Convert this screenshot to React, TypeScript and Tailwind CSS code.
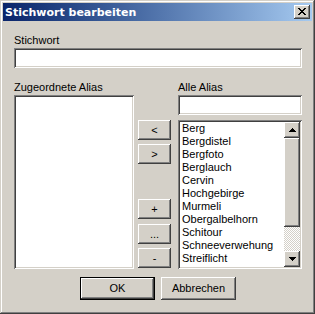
import React from "react";

const raised =
  "bg-[#d4d0c8] shadow-[inset_-1px_-1px_#404040,inset_1px_1px_#fff,inset_-2px_-2px_#808080,inset_2px_2px_#d4d0c8]";
const sunken =
  "bg-white shadow-[inset_1px_1px_#808080,inset_-1px_-1px_#fff,inset_2px_2px_#404040,inset_-2px_-2px_#d4d0c8]";

const aliases = [
  "Berg",
  "Bergdistel",
  "Bergfoto",
  "Berglauch",
  "Cervin",
  "Hochgebirge",
  "Murmeli",
  "Obergalbelhorn",
  "Schitour",
  "Schneeverwehung",
  "Streiflicht",
  "Sonnenblumen",
];

// pixel rows: [y, x, width]
const closeGlyph = [
  [0, 0, 2], [0, 6, 2],
  [1, 1, 2], [1, 5, 2],
  [2, 2, 4],
  [3, 3, 2],
  [4, 2, 4],
  [5, 1, 2], [5, 5, 2],
  [6, 0, 2], [6, 6, 2],
];

const Pixels = ({ rows, w, h }: { rows: number[][]; w: number; h: number }) => (
  <svg width={w} height={h} viewBox={`0 0 ${w} ${h}`} shapeRendering="crispEdges">
    {rows.map(([y, x, width], i) => (
      <rect key={i} x={x} y={y} width={width} height={1} fill="#000" />
    ))}
  </svg>
);

const upArrow = [
  [0, 3, 1],
  [1, 2, 3],
  [2, 1, 5],
  [3, 0, 7],
];
const downArrow = upArrow.map(([y, x, w]) => [3 - y, x, w]);

const Button = ({ label, className = "" }: { label: string; className?: string }) => (
  <div className={`${raised} flex h-[20px] w-[33px] items-center justify-center ${className}`}>
    {label}
  </div>
);

const App = () => {
  return (
    <div className="flex h-[314px] w-[315px] flex-col bg-[#d4d0c8] p-[3px] font-['Liberation_Sans',Arial,sans-serif] text-[11px] leading-[13px] text-black shadow-[inset_-1px_-1px_#404040,inset_1px_1px_#d4d0c8,inset_-2px_-2px_#808080,inset_2px_2px_#fff]">
      {/* title bar */}
      <div className="flex h-[18px] items-center justify-between bg-linear-to-r from-[#0a246a] to-[#a6caf0] pl-[2px] pr-[2px]">
        <span className="font-['DejaVu_Sans',sans-serif] font-bold text-white">Stichwort bearbeiten</span>
        <div className={`${raised} flex h-[14px] w-[16px] items-center justify-center pb-[1px]`}>
          <Pixels rows={closeGlyph} w={8} h={7} />
        </div>
      </div>

      <div className="flex flex-col pl-[11px]">
        <div className="mt-[13px]">Stichwort</div>
        <div className={`${sunken} mt-[1px] h-[20px] w-[288px]`} />

        <div className="mt-[13px] flex">
          <div className="w-[164px]">Zugeordnete Alias</div>
          <div>Alle Alias</div>
        </div>

        <div className="mt-[1px] flex">
          <div className={`${sunken} h-[174px] w-[120px]`} />

          <div className="ml-[4px] flex w-[33px] flex-col pt-[25px]">
            <Button label="<" />
            <Button label=">" className="mt-[4px]" />
            <Button label="+" className="mt-[35px]" />
            <Button label="..." className="mt-[5px]" />
            <Button label="-" className="mt-[4px]" />
          </div>

          <div className="ml-[7px] flex w-[124px] flex-col">
            <div className={`${sunken} h-[20px]`} />
            <div className={`${sunken} mt-[5px] flex h-[149px] p-[2px]`}>
              <div className="flex-1 overflow-hidden pl-[2px]">
                {aliases.map((a) => (
                  <div key={a} className="h-[13px] whitespace-nowrap">
                    {a}
                  </div>
                ))}
              </div>
              <div className="flex w-[16px] flex-col">
                <div className={`${raised} flex h-[16px] items-center justify-center`}>
                  <Pixels rows={upArrow} w={7} h={4} />
                </div>
                <div className={`${raised} h-[89px]`} />
                <div className="flex-1 bg-[repeating-conic-gradient(#d4d0c8_0_25%,#fff_0_50%)] bg-size-[2px_2px]" />
                <div className={`${raised} flex h-[16px] items-center justify-center`}>
                  <Pixels rows={downArrow} w={7} h={4} />
                </div>
              </div>
            </div>
          </div>
        </div>

        <div className="mt-[8px] flex">
          <div className="ml-[66px] flex h-[23px] w-[75px] items-center justify-center border border-black bg-[#d4d0c8] shadow-[inset_-1px_-1px_#404040,inset_1px_1px_#fff,inset_-2px_-2px_#808080,inset_2px_2px_#d4d0c8]">
            OK
          </div>
          <div className={`${raised} ml-[6px] flex h-[23px] w-[75px] items-center justify-center`}>
            Abbrechen
          </div>
        </div>
      </div>
    </div>
  );
};

export default App;
